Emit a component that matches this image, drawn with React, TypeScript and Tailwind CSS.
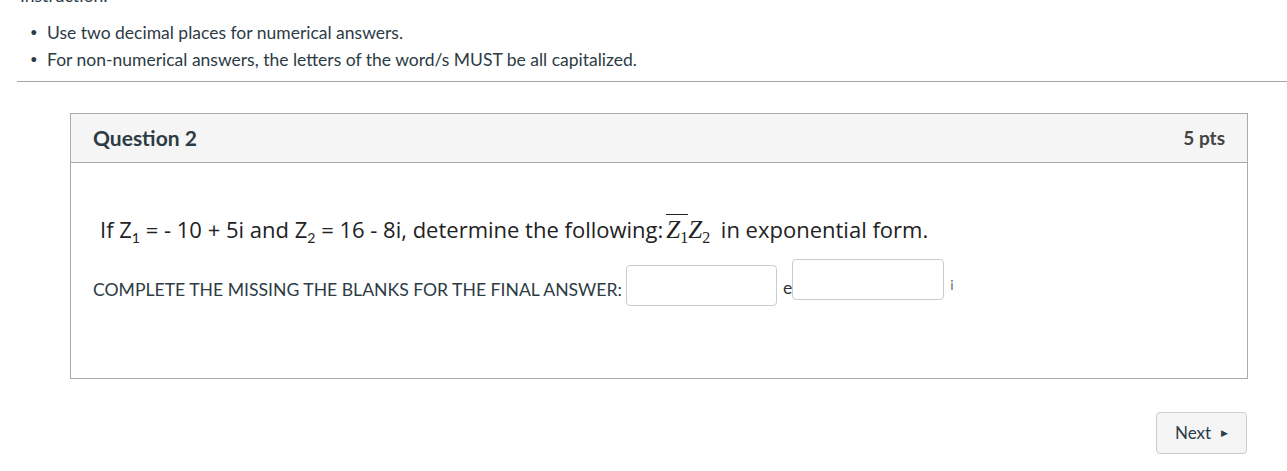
import React from "react";

export default function App() {
  return (
    <div className="w-[1287px] h-[471px] overflow-hidden bg-white text-[#2d3b45]" style={{ fontFamily: "Lato, 'Noto Sans', sans-serif" }}>
      <div className="h-[4px] overflow-hidden pl-[20px]">
        <div className="-mt-[13px] text-[17.5px] leading-[18px]">Instruction:</div>
      </div>
      <ul className="mt-[15px] text-[17.5px] leading-[27px]">
        <li className="flex items-center">
          <span className="w-[47px] pl-[30px] text-[13px]">•</span>
          <span>Use two decimal places for numerical answers.</span>
        </li>
        <li className="flex items-center">
          <span className="w-[47px] pl-[30px] text-[13px]">•</span>
          <span>For non-numerical answers, the letters of the word/s MUST be all capitalized.</span>
        </li>
      </ul>
      <div className="mt-[8px] ml-[17px] h-px bg-[#a5a5a5]" />
      <div className="mt-[31px] ml-[70px] mr-[39px] border border-[#aaaaaa]">
        <div className="h-[49px] bg-[#f5f5f5] border-b border-[#aaaaaa] flex items-center justify-between pl-[22px] pr-[22px]">
          <span className="text-[21px] font-bold">Question 2</span>
          <span className="text-[19px] font-bold text-[#444]">5 pts</span>
        </div>
        <div className="h-[215px] pl-[22px]">
          <div className="pt-[51px] pl-[7px] text-[22px] text-[#222] leading-[30px]" style={{ fontFamily: "'Open Sans', sans-serif" }}>
            If Z<span className="text-[14px] relative top-[5px]" style={{ fontFamily: "Lato, sans-serif" }}>1</span> = - 10 + 5i and Z<span className="text-[14px] relative top-[5px]" style={{ fontFamily: "Lato, sans-serif" }}>2</span> = 16 - 8i, determine the following:
            <span style={{ fontFamily: "'Liberation Serif', serif" }} className="ml-[3px] italic text-[25px]">
              <span className="border-t border-[#222] pt-[1px]">Z<span className="not-italic text-[16px] relative top-[5px]">1</span></span>Z<span className="not-italic text-[16px] relative top-[5px]">2</span>
            </span>{" "}
            <span className="ml-[5px]">in exponential form.</span>
          </div>
          <div className="mt-[17px] flex items-end text-[17.6px]">
            <span className="mb-[3px]">COMPLETE THE MISSING THE BLANKS FOR THE FINAL ANSWER:</span>
            <span className="ml-[4px] w-[151px] h-[41px] border border-[#c7cdd1] rounded-[4px] bg-white" />
            <span className="ml-[6px] mb-[5px] text-[#333]">e</span>
            <span className="self-start -mt-[6px] w-[152px] h-[41px] border border-[#c7cdd1] rounded-[4px] bg-white" />
            <span className="self-start mt-[11px] ml-[6px] text-[14px] leading-[17px] text-[#666]">i</span>
          </div>
        </div>
      </div>
      <div className="mt-[33px] mr-[40px] flex justify-end">
        <button className="w-[91px] h-[42px] rounded-[4px] border border-[#c7cdd1] bg-[#f5f5f5] flex items-center justify-center gap-[10px] text-[17px] text-[#2d3b45]">
          <span>Next</span>
          <span className="text-[9px]">▶</span>
        </button>
      </div>
    </div>
  );
}
